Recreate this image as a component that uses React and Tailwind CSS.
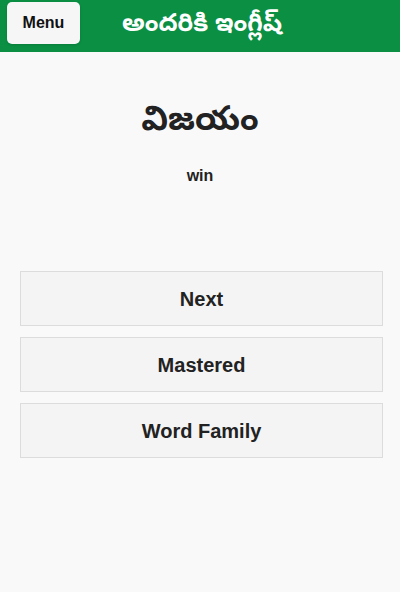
import React from 'react';

const sans = { fontFamily: '"Liberation Sans", "Noto Sans", "Noto Sans Telugu", sans-serif' };

function ActionButton({ children }) {
  return (
    <button className="w-full h-[55px] bg-[#f4f4f4] border border-[#dcdcdc] text-[20px] font-bold text-[#222]">
      {children}
    </button>
  );
}

function App() {
  return (
    <div className="w-[400px] h-[592px] bg-[#f9f9f9] flex flex-col" style={sans}>
      <header className="h-[52px] bg-[#0a8f43] flex items-center px-[7px] gap-[42px]">
        <button className="w-[73px] h-[42px] mt-[-6px] bg-[#f6f6f6] rounded-[5px] text-[16px] font-bold text-[#111] shadow-sm">
          Menu
        </button>
        <h1 className="text-white text-[25px] font-bold mt-[-6px]">అందరికి ఇంగ్లీష్</h1>
      </header>

      <main className="flex flex-col items-center">
        <h2 className="mt-[45px] text-[34px] font-bold text-[#222] leading-[42px]">విజయం</h2>
        <p className="mt-[25px] text-[16px] font-bold text-[#222]">win</p>

        <div className="mt-[83px] w-full px-[20px] pr-[17px] flex flex-col gap-[11px]">
          <ActionButton>Next</ActionButton>
          <ActionButton>Mastered</ActionButton>
          <ActionButton>Word Family</ActionButton>
        </div>
      </main>
    </div>
  );
}

export default App;
